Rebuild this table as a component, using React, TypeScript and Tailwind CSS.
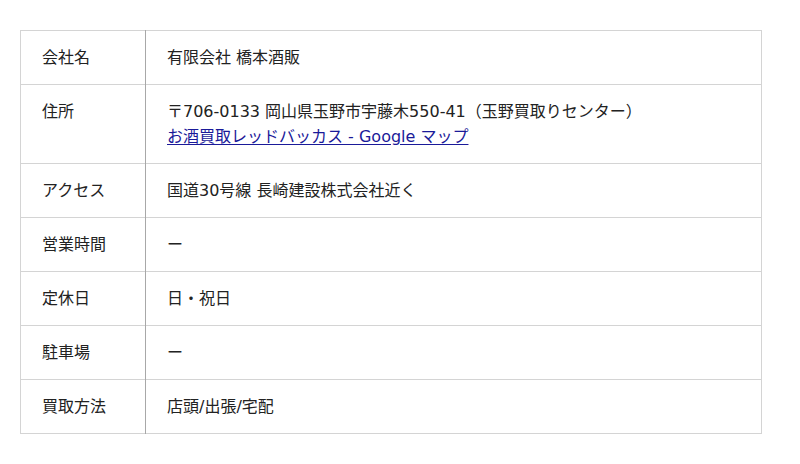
import React from 'react'

const rows: { label: string; value: React.ReactNode }[] = [
  { label: '会社名', value: '有限会社 橋本酒販' },
  {
    label: '住所',
    value: (
      <>
        〒706-0133 岡山県玉野市宇藤木550-41（玉野買取りセンター）
        <br />
        <a href="#" className="text-[#1a1a99] underline underline-offset-2">
          お酒買取レッドバッカス - Google マップ
        </a>
      </>
    ),
  },
  { label: 'アクセス', value: '国道30号線 長崎建設株式会社近く' },
  { label: '営業時間', value: 'ー' },
  { label: '定休日', value: '日・祝日' },
  { label: '駐車場', value: 'ー' },
  { label: '買取方法', value: '店頭/出張/宅配' },
]

const App = () => {
  return (
    <div className="w-[800px] h-[464px] bg-white pt-[30px] px-[20px] font-['DejaVu_Sans','Noto_Sans_CJK_JP',sans-serif] text-[16px] leading-[25px] text-[#222]">
      <table className="w-[742px] border-collapse">
        <tbody>
          {rows.map((row) => (
            <tr key={row.label} className="border border-[#d4d4d4]">
              <th className="w-[125px] border-r border-[#a8a8a8] px-[21px] py-[14px] text-left align-top font-normal">
                {row.label}
              </th>
              <td className="px-[21px] py-[14px] align-top">{row.value}</td>
            </tr>
          ))}
        </tbody>
      </table>
    </div>
  )
}

export default App
